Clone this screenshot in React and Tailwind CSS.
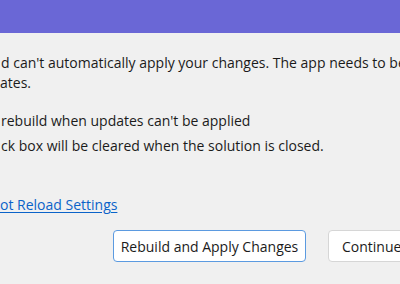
export default function App() {
  const font = { fontFamily: '"Open Sans", "Noto Sans", sans-serif' };
  return (
    <div className="w-[400px] h-[284px] overflow-hidden bg-[#f0f0f0] text-[#1b1b1b]" style={font}>
      <div className="h-[33px] bg-[#6a67d6]" />
      <div className="pt-[20px] text-[14px] leading-[20px] whitespace-nowrap">
        <div className="pl-[1px]">d can't automatically apply your changes. The app needs to be rebuilt</div>
        <div>ates.</div>
        <div className="mt-[18px] pl-[1px]">rebuild when updates can't be applied</div>
        <div className="mt-[5px] pl-[1px]">ck box will be cleared when the solution is closed.</div>
        <div className="mt-[39px] text-[#0a63c9] underline underline-offset-2">ot Reload Settings</div>
      </div>
      <div className="flex gap-[22px] pl-[113px] mt-[15px] text-[14px] whitespace-nowrap">
        <button className="h-[32px] w-[193px] shrink-0 rounded-[4px] border border-[#5b9ae0] bg-white text-[#1b1b1b]">Rebuild and Apply Changes</button>
        <button className="h-[32px] w-[120px] shrink-0 rounded-[4px] border border-[#d6d6d6] bg-white text-left pl-[13px] text-[#1b1b1b]">Continue Editing</button>
      </div>
    </div>
  );
}
